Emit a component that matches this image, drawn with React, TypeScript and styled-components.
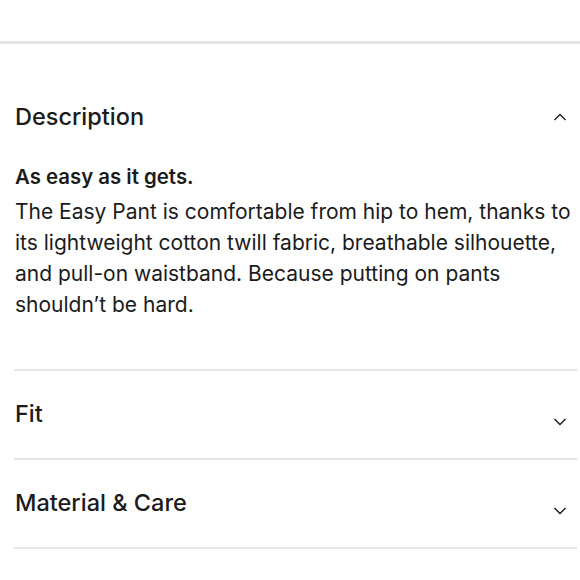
import styled, { createGlobalStyle } from 'styled-components';

const GlobalStyle = createGlobalStyle`
  html, body {
    margin: 0;
    padding: 0;
    background: #ffffff;
  }
  body {
    font-family: Inter, "Noto Sans", "Liberation Sans", sans-serif;
    color: #1b1b1b;
    -webkit-font-smoothing: antialiased;
  }
`;

const Page = styled.div`
  padding-top: 41px;
`;

const Accordion = styled.section`
  border-top: 3px solid #e4e4e4;
  padding-top: 15px;
`;

const Item = styled.div`
  margin: 0 3px 0 14px;
  border-bottom: 2px solid #e6e6e6;
`;

const Header = styled.button<{ $open?: boolean }>`
  display: flex;
  width: 100%;
  align-items: ${({ $open }) => ($open ? 'center' : 'flex-start')};
  justify-content: space-between;
  padding: ${({ $open }) => ($open ? '44px 10px 31px 1px' : '29px 10px 0 1px')};
  height: ${({ $open }) => ($open ? 'auto' : '87px')};
  box-sizing: border-box;
  border: none;
  background: none;
  cursor: pointer;
  font: inherit;
  color: inherit;
  text-align: left;
`;

const Title = styled.span`
  font-size: 23.5px;
  font-weight: 500;
  line-height: 28px;
`;

const Chevron = styled.svg<{ $open?: boolean }>`
  width: 14px;
  height: 8px;
  flex: none;
  margin-top: ${({ $open }) => ($open ? '0' : '18px')};
`;

const Panel = styled.div`
  padding: 0 0 49px 1px;
`;

const Lead = styled.p`
  margin: 0 0 4px;
  font-size: 20.4px;
  font-weight: 600;
  line-height: 30px;
`;

const Body = styled.p`
  margin: 0;
  font-size: 21px;
  font-weight: 400;
  line-height: 31px;
`;

function Caret({ open }: { open?: boolean }) {
  return (
    <Chevron $open={open} viewBox="0 0 14 8" fill="none" stroke="#1b1b1b" strokeWidth="1.4">
      {open ? <path d="M1.5 7L7 1.5L12.5 7" /> : <path d="M1.5 1L7 6.5L12.5 1" />}
    </Chevron>
  );
}

const sections = [
  { title: 'Fit' },
  { title: 'Material & Care' },
];

export default function App() {
  return (
    <Page>
      <GlobalStyle />
      <Accordion>
        <Item>
          <Header $open>
            <Title>Description</Title>
            <Caret open />
          </Header>
          <Panel>
            <Lead>As easy as it gets.</Lead>
            <Body>
              The Easy Pant is comfortable from hip to hem, thanks to its lightweight cotton twill
              fabric, breathable silhouette, and pull-on waistband. Because putting on pants
              shouldn’t be hard.
            </Body>
          </Panel>
        </Item>
        {sections.map((s) => (
          <Item key={s.title}>
            <Header>
              <Title>{s.title}</Title>
              <Caret />
            </Header>
          </Item>
        ))}
      </Accordion>
    </Page>
  );
}
